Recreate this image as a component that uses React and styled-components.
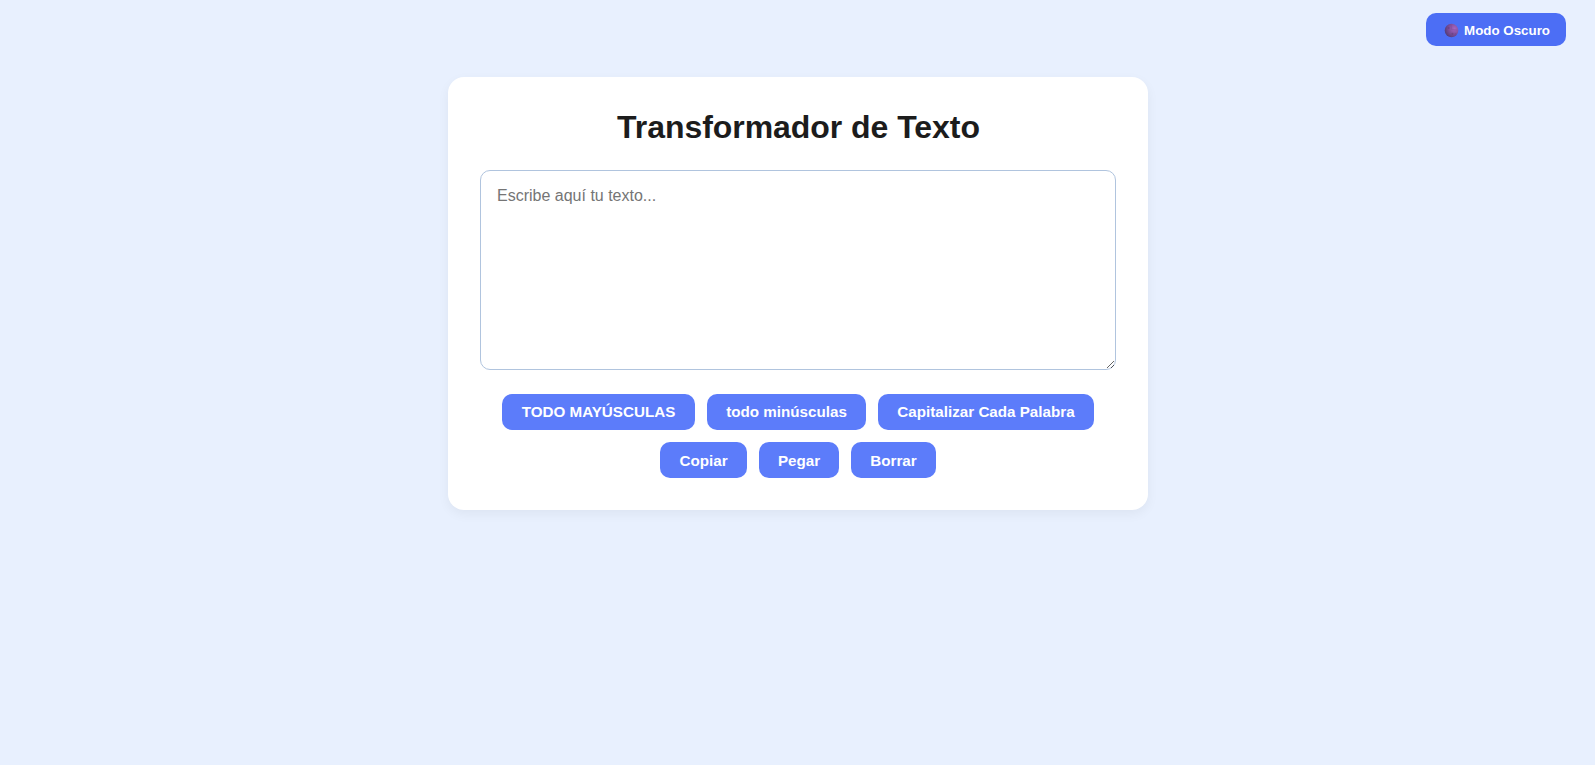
import React, { useState } from 'react';
import styled, { createGlobalStyle } from 'styled-components';

const GlobalStyle = createGlobalStyle`
  *, *::before, *::after { box-sizing: border-box; }
  body {
    margin: 0;
    min-height: 100vh;
    background: #e8f0fe;
    color: #1c1c1c;
    font-family: Arial, "Liberation Sans", sans-serif;
  }
`;

const Header = styled.header`
  display: flex;
  justify-content: flex-end;
  padding: 13px 29px 0 0;
`;

const Button = styled.button`
  display: inline-flex;
  align-items: center;
  justify-content: center;
  border: none;
  color: #fff;
  font-family: inherit;
  font-weight: bold;
  white-space: nowrap;
  cursor: pointer;
`;

const ThemeButton = styled(Button)`
  gap: 5px;
  width: 140px;
  height: 33px;
  padding: 2px 16px 0;
  justify-content: flex-end;
  border-radius: 10px;
  background: #4c6ef5;
  font-size: 13.333px;
`;

const Moon = styled.svg`
  display: block;
  width: 15px;
  height: 15px;
`;

const Card = styled.main`
  width: 700px;
  margin: 31px 0 0 448px;
  padding: 32px;
  border-radius: 16px;
  background: #fff;
  box-shadow: 0 4px 12px rgba(0, 0, 0, 0.05);
`;

const Title = styled.h1`
  margin: 0 0 24px;
  padding-left: 1px;
  font-size: 32px;
  line-height: 37px;
  letter-spacing: -0.05px;
  text-align: center;
`;

const TextArea = styled.textarea`
  display: block;
  width: 100%;
  height: 200px;
  padding: 16px;
  border: 1px solid #b0c4de;
  border-radius: 10px;
  outline: none;
  background: #fff;
  color: inherit;
  font-family: inherit;
  font-size: 16px;
  resize: vertical;
  &::placeholder { color: #757575; }
`;

const Actions = styled.div`
  display: flex;
  flex-wrap: wrap;
  justify-content: center;
  gap: 12px;
  margin-top: 24px;
`;

const ActionButton = styled(Button)`
  width: ${({ $width }) => $width}px;
  height: 36.2px;
  padding: 9.4px 0 9.8px;
  border-radius: 10px;
  background: #5c7cfa;
  font-size: 15.2px;
  line-height: 17px;
`;

const capitalize = (value) =>
  value.toLowerCase().replace(/(^|\s)\S/g, (match) => match.toUpperCase());

export default function App() {
  const [text, setText] = useState('');

  const paste = async () => setText(await navigator.clipboard.readText());

  const actions = [
    ['TODO MAYÚSCULAS', 193, () => setText(text.toUpperCase())],
    ['todo minúsculas', 159, () => setText(text.toLowerCase())],
    ['Capitalizar Cada Palabra', 216, () => setText(capitalize(text))],
    ['Copiar', 87, () => navigator.clipboard.writeText(text)],
    ['Pegar', 80, paste],
    ['Borrar', 85, () => setText('')],
  ];

  return (
    <>
      <GlobalStyle />
      <Header>
        <ThemeButton>
          <Moon viewBox="0 0 15 15" aria-hidden="true">
            <defs>
              <radialGradient id="moon" cx="0.72" cy="0.36" r="0.75">
                <stop offset="0" stopColor="#a566c0" />
                <stop offset="0.5" stopColor="#83509f" />
                <stop offset="1" stopColor="#533c78" />
              </radialGradient>
            </defs>
            <circle cx="7.5" cy="7.5" r="6.8" fill="url(#moon)" />
            <path d="M7.3 1.5l.3 5 5.8.6" fill="none" stroke="#7d4a98" strokeWidth="0.7" opacity="0.6" />
            <circle cx="4.7" cy="5" r="1" fill="#633d80" opacity="0.6" />
            <circle cx="8.5" cy="10.8" r="1.1" fill="#66417f" opacity="0.7" />
            <circle cx="11.5" cy="11" r="0.8" fill="#71458e" opacity="0.7" />
          </Moon>
          Modo Oscuro
        </ThemeButton>
      </Header>
      <Card>
        <Title>Transformador de Texto</Title>
        <TextArea
          value={text}
          onChange={(event) => setText(event.target.value)}
          placeholder="Escribe aquí tu texto..."
        />
        <Actions>
          {actions.map(([label, width, onClick]) => (
            <ActionButton key={label} $width={width} onClick={onClick}>{label}</ActionButton>
          ))}
        </Actions>
      </Card>
    </>
  );
}
